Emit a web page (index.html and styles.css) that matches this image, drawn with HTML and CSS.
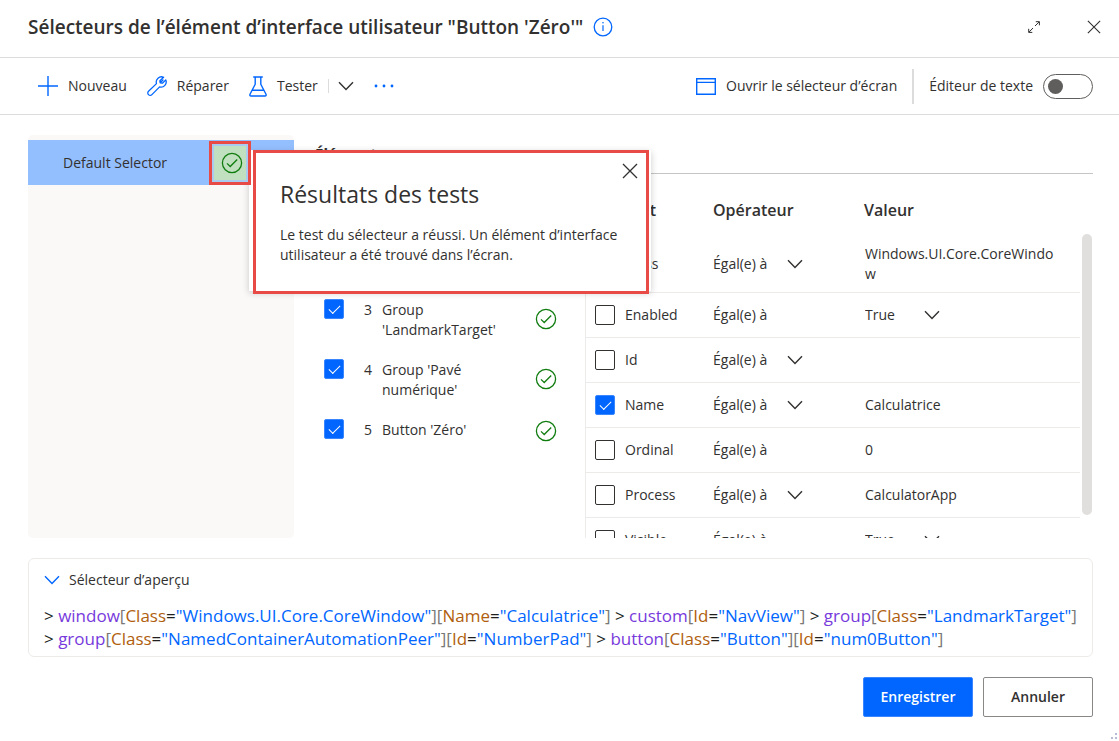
FILE: index.html
```html
<!DOCTYPE html>
<html lang="fr">
<head>
<meta charset="utf-8">
<title>Sélecteurs de l’élément d’interface utilisateur</title>
<link rel="stylesheet" href="styles.css">
</head>
<body>
<svg class="defs" width="0" height="0" aria-hidden="true">
  <symbol id="chevron" viewBox="0 0 16 10"><path d="M1 1.2 8 8.4 15 1.2" fill="none" stroke="currentColor" stroke-width="1.4"/></symbol>
  <symbol id="close" viewBox="0 0 16 16"><path d="M1 1 15 15M15 1 1 15" fill="none" stroke="currentColor" stroke-width="1.3"/></symbol>
  <symbol id="success" viewBox="0 0 22 22"><circle cx="11" cy="11" r="9.6" fill="none" stroke="currentColor" stroke-width="1.3"/><path d="M6 11.4 9.2 14.5 16.2 7.5" fill="none" stroke="currentColor" stroke-width="1.3"/></symbol>
</svg>
<div class="dialog">
  <header class="titlebar">
    <h1 class="title">Sélecteurs de l’élément d’interface utilisateur "Button 'Zéro'"</h1>
    <button class="icon-button accent" aria-label="Informations">
      <svg width="20" height="20" viewBox="0 0 20 20" fill="none" stroke="currentColor"><circle cx="10" cy="10" r="8.8" stroke-width="1.3"/><path d="M10 8.2V14" stroke-width="1.2"/><circle cx="10" cy="5.8" r=".8" fill="currentColor" stroke="none"/></svg>
    </button>
    <div class="window-actions">
      <button class="icon-button" aria-label="Agrandir">
        <svg width="14" height="14" viewBox="0 0 14 14" fill="none" stroke="currentColor"><path d="M8.8 1.7H12.4V5.3M12.2 1.9 8 6M1.7 8.8V12.4H5.3M1.9 12.2 6 8"/></svg>
      </button>
      <button class="icon-button" aria-label="Fermer"><svg width="14" height="14"><use href="#close"/></svg></button>
    </div>
  </header>

  <div class="toolbar">
    <button class="command">
      <svg class="accent" width="20" height="20" viewBox="0 0 20 20" fill="none" stroke="currentColor" stroke-width="1.4"><path d="M10 0V20M0 10H20"/></svg>
      Nouveau
    </button>
    <button class="command">
      <svg class="accent" width="20" height="20" viewBox="0 0 20 20" fill="none" stroke="currentColor" stroke-width="1.3" stroke-linejoin="round" stroke-linecap="round"><path d="M16.6 1.3A5.2 5.2 0 0 0 9.5 7.6L1.5 15.2A2.4 2.4 0 0 0 4.9 18.6L12.6 10.9A5.2 5.2 0 0 0 18.8 3.9L15.4 7.2 13.2 6.8 12.9 4.8ZM13.2 6.8 16 4"/></svg>
      Réparer
    </button>
    <div class="split">
      <button class="command">
        <svg class="accent" width="18" height="21" viewBox="0 0 18 21" fill="none" stroke="currentColor" stroke-width="1.4" stroke-linejoin="round"><path d="M4.2 1H13.8M6.2 1V8.2L1 18.2Q.5 20 2 20H16Q17.5 20 17 18.2L11.8 8.2V1M3.2 14.2H14.8"/></svg>
        Tester
      </button>
      <button class="split-toggle" aria-label="Options de test"><svg width="16" height="10"><use href="#chevron"/></svg></button>
    </div>
    <button class="icon-button accent" aria-label="Plus">
      <svg width="20" height="4" viewBox="0 0 20 4" fill="currentColor"><circle cx="2" cy="2" r="1.4"/><circle cx="10" cy="2" r="1.4"/><circle cx="18" cy="2" r="1.4"/></svg>
    </button>
    <div class="toolbar-end">
      <button class="command">
        <svg class="accent" width="20" height="17" viewBox="0 0 20 17" fill="none" stroke="currentColor" stroke-width="1.4"><path d="M.7.7H19.3V16.3H.7ZM.7 4.4H19.3"/></svg>
        Ouvrir le sélecteur d’écran
      </button>
      <div class="text-editor">
        <label for="editor-switch">Éditeur de texte</label>
        <input class="switch" type="checkbox" role="switch" id="editor-switch">
      </div>
    </div>
  </div>

  <main class="workspace">
    <nav class="selectors">
      <div class="selector-row">
        <button class="selector-name">Default Selector</button>
        <button class="status" aria-label="Test réussi"><svg width="22" height="22"><use href="#success"/></svg></button>
      </div>
    </nav>

    <section class="elements">
      <h2 class="section-title">Éléments</h2>
      <ul class="element-list">
        <li class="element">
          <input class="tick" type="checkbox" id="el3" checked>
          <label class="element-label" for="el3"><span>3</span><span>Group 'LandmarkTarget'</span></label>
          <svg class="ok" width="22" height="22"><use href="#success"/></svg>
        </li>
        <li class="element">
          <input class="tick" type="checkbox" id="el4" checked>
          <label class="element-label" for="el4"><span>4</span><span>Group 'Pavé numérique'</span></label>
          <svg class="ok" width="22" height="22"><use href="#success"/></svg>
        </li>
        <li class="element">
          <input class="tick" type="checkbox" id="el5" checked>
          <label class="element-label" for="el5"><span>5</span><span>Button 'Zéro'</span></label>
          <svg class="ok" width="22" height="22"><use href="#success"/></svg>
        </li>
      </ul>
    </section>

    <section class="attributes">
      <div class="table-area">
        <table class="attribute-table">
          <colgroup><col class="col-name"><col class="col-operator"><col></colgroup>
          <thead><tr><th>Attribut</th><th>Opérateur</th><th>Valeur</th></tr></thead>
          <tbody>
            <tr class="tall">
              <td><label class="attribute"><input class="tick" type="checkbox" checked>Class</label></td>
              <td><span class="dropdown"><select aria-label="Opérateur de Class"><option>Égal(e) à</option></select><svg width="16" height="10"><use href="#chevron"/></svg></span></td>
              <td>Windows.UI.Core.CoreWindow</td>
            </tr>
            <tr>
              <td><label class="attribute"><input class="tick" type="checkbox">Enabled</label></td>
              <td>Égal(e) à</td>
              <td><span class="dropdown short"><select aria-label="Valeur de Enabled"><option>True</option></select><svg width="16" height="10"><use href="#chevron"/></svg></span></td>
            </tr>
            <tr>
              <td><label class="attribute"><input class="tick" type="checkbox">Id</label></td>
              <td><span class="dropdown"><select aria-label="Opérateur de Id"><option>Égal(e) à</option></select><svg width="16" height="10"><use href="#chevron"/></svg></span></td>
              <td></td>
            </tr>
            <tr>
              <td><label class="attribute"><input class="tick" type="checkbox" checked>Name</label></td>
              <td><span class="dropdown"><select aria-label="Opérateur de Name"><option>Égal(e) à</option></select><svg width="16" height="10"><use href="#chevron"/></svg></span></td>
              <td>Calculatrice</td>
            </tr>
            <tr>
              <td><label class="attribute"><input class="tick" type="checkbox">Ordinal</label></td>
              <td>Égal(e) à</td>
              <td>0</td>
            </tr>
            <tr>
              <td><label class="attribute"><input class="tick" type="checkbox">Process</label></td>
              <td><span class="dropdown"><select aria-label="Opérateur de Process"><option>Égal(e) à</option></select><svg width="16" height="10"><use href="#chevron"/></svg></span></td>
              <td>CalculatorApp</td>
            </tr>
            <tr>
              <td><label class="attribute"><input class="tick" type="checkbox">Visible</label></td>
              <td>Égal(e) à</td>
              <td><span class="dropdown short"><select aria-label="Valeur de Visible"><option>True</option></select><svg width="16" height="10"><use href="#chevron"/></svg></span></td>
            </tr>
          </tbody>
        </table>
        <div class="scrollbar"></div>
      </div>
    </section>

    <div class="callout" role="dialog" aria-labelledby="callout-title">
      <div class="callout-frame">
        <button class="icon-button callout-close" aria-label="Fermer les résultats"><svg width="16" height="16"><use href="#close"/></svg></button>
        <h2 class="callout-title" id="callout-title">Résultats des tests</h2>
        <p class="callout-text">Le test du sélecteur a réussi. Un élément d’interface utilisateur a été trouvé dans l’écran.</p>
      </div>
    </div>
  </main>

  <section class="preview">
    <button class="preview-toggle"><svg class="accent" width="16" height="10"><use href="#chevron"/></svg>Sélecteur d’aperçu</button>
    <code class="code">&gt; <span class="tag">window</span><i>[</i><b>Class</b>=<q>"Windows.UI.Core.CoreWindow"</q><i>][</i><b>Name</b>=<q>"Calculatrice"</q><i>]</i> &gt; <span class="tag">custom</span><i>[</i><b>Id</b>=<q>"NavView"</q><i>]</i> &gt; <span class="tag">group</span><i>[</i><b>Class</b>=<q>"LandmarkTarget"</q><i>]</i><br>&gt; <span class="tag">group</span><i>[</i><b>Class</b>=<q>"NamedContainerAutomationPeer"</q><i>][</i><b>Id</b>=<q>"NumberPad"</q><i>]</i> &gt; <span class="tag">button</span><i>[</i><b>Class</b>=<q>"Button"</q><i>][</i><b>Id</b>=<q>"num0Button"</q><i>]</i></code>
  </section>

  <footer class="footer">
    <button class="button primary">Enregistrer</button>
    <button class="button">Annuler</button>
  </footer>
  <svg class="grip" width="8" height="8" viewBox="0 0 8 8" fill="#b4bcd6" aria-hidden="true"><path d="M4 0H6V2H4ZM0 4H2V6H0ZM4 4H6V6H4Z"/></svg>
</div>
</body>
</html>
```
FILE: styles.css
```css
* { box-sizing: border-box; }

body {
  margin: 0;
  background: #fff;
  color: #323130;
  font: 14px/20px "Open Sans", "Noto Sans", sans-serif;
}

h1, h2, p, ul { margin: 0; padding: 0; }

button, select {
  padding: 0;
  border: 0;
  background: none;
  color: inherit;
  font: inherit;
  cursor: pointer;
}

svg { display: block; flex: none; }
.defs { position: absolute; }
.accent { color: #06f; }

.dialog {
  position: relative;
  display: flex;
  flex-direction: column;
  height: 100vh;
  min-height: 560px;
}

/* Title bar */
.titlebar {
  display: flex;
  align-items: center;
  gap: 10px;
  height: 58px;
  padding: 0 18px 3px 28px;
  border-bottom: 1px solid #dcdcdc;
}
.title { font-size: 19px; line-height: 26px; font-weight: 600; }
.window-actions { display: flex; align-items: center; gap: 46px; margin-left: auto; }

/* Toolbar */
.toolbar {
  display: flex;
  align-items: center;
  gap: 20px;
  height: 57px;
  padding: 0 26px 0 38px;
  border-bottom: 1px solid #dcdcdc;
}
.command { display: flex; align-items: center; gap: 10px; white-space: nowrap; }
.split { display: flex; align-items: center; gap: 10px; }
.split-toggle { padding: 2px 0 2px 9px; border-left: 1px solid #dcdcdc; }
.toolbar-end { display: flex; align-items: center; gap: 15px; margin-left: auto; }
.text-editor {
  display: flex;
  align-items: center;
  gap: 10px;
  height: 35px;
  padding-left: 15px;
  border-left: 2px solid #dcdcdc;
}
.switch {
  appearance: none;
  display: flex;
  align-items: center;
  width: 50px;
  height: 25px;
  margin: 0;
  padding: 0 4px;
  border: 1px solid #605e5c;
  border-radius: 13px;
}
.switch::before { content: ""; width: 15px; height: 15px; border-radius: 50%; background: #605e5c; }

/* Workspace */
.workspace {
  position: relative;
  display: grid;
  grid-template-columns: 266px 271px 1fr;
  gap: 0 10px;
  flex: 1;
  min-height: 0;
  margin: 20px 26px 20px 28px;
}
.selectors { padding-top: 5px; border-radius: 5px; background: #faf9f8; }
.selector-row { display: flex; height: 45px; background: #94bfff; }
.selector-name { width: 181px; padding-left: 35px; text-align: left; }
.status {
  position: relative;
  z-index: 2;
  display: grid;
  place-items: center;
  width: 42px;
  height: 44px;
  margin-top: 1px;
  padding-left: 4px;
  border: 3px solid #e84a45;
  background: #c1e0bf;
  box-shadow: inset 0 0 0 2px #a9cbef;
  color: #107c10;
}

.elements { padding: 8px 0 0 11px; }
.section-title { font-size: 15px; line-height: 20px; font-weight: 700; }
.element-list { display: grid; gap: 20px; padding: 137px 0 0 9px; list-style: none; }
.element { display: grid; grid-template-columns: 20px 143px 22px; gap: 0 20px; }
.element .tick { margin-top: -1px; }
.element .ok { align-self: center; margin: 0 0 2px 8px; color: #107c10; }
.element-label { display: flex; gap: 10px; }

.tick {
  appearance: none;
  display: grid;
  place-items: center;
  flex: none;
  width: 20px;
  height: 20px;
  margin: 0;
  border: 1px solid #323130;
  border-radius: 2px;
}
.tick:checked { border-color: #3a86ff; background: #06f; }
.tick:checked::before {
  content: "";
  width: 10px;
  height: 5px;
  margin-bottom: 3px;
  border: solid #fff;
  border-width: 0 0 1px 1px;
  transform: rotate(-45deg);
}

.attributes { min-height: 0; padding-top: 38px; overflow: hidden; }
.table-area { display: grid; grid-template-columns: 1fr 10px; gap: 2px; padding-right: 1px; border-top: 1px solid #c8c6c4; }
.attribute-table {
  width: 100%;
  border-collapse: separate;
  border-spacing: 0;
  border-left: 1px solid #edebe9;
  table-layout: fixed;
}
.col-name { width: 127px; }
.col-operator { width: 151px; }
th { height: 61px; padding: 10px 0 0; font-size: 16px; font-weight: 600; text-align: left; }
th:first-child, td:first-child { padding-left: 9px; }
td { height: 45px; padding: 0; border-bottom: 1px solid #edebe9; }
.tall td { height: 58px; }
td:last-child { padding: 0 20px 0 1px; overflow-wrap: anywhere; }
.attribute { display: flex; align-items: center; gap: 10px; }
.dropdown { display: grid; grid-template-columns: 90px; align-items: center; }
.dropdown.short { grid-template-columns: 75px; }
.dropdown select, .dropdown svg { grid-area: 1 / 1; }
.dropdown select { appearance: none; width: 100%; }
.dropdown svg { justify-self: end; pointer-events: none; }
.scrollbar { height: 281px; margin-top: 60px; border-radius: 5px; background: #e1dfdd; }

/* Test result callout */
.callout {
  position: absolute;
  top: 15px;
  left: 221px;
  width: 402px;
  padding: 0 2px 0 4px;
  background: #fff;
  box-shadow: 0 2px 7px rgba(0, 0, 0, .2);
}
.callout-frame {
  position: relative;
  height: 144px;
  margin-bottom: -3px;
  padding: 25px 20px 20px 24px;
  border: 3px solid #e84a45;
  background: #fff;
}
.callout-close { position: absolute; top: 10px; right: 8px; }
.callout-title { font-size: 23px; line-height: 32px; font-weight: 400; }
.callout-text { margin-top: 15px; }

/* Selector preview */
.preview { margin: 0 26px 0 28px; padding: 11px 15px 6px; border: 1px solid #edebe9; border-radius: 6px; }
.preview-toggle { display: flex; align-items: center; gap: 9px; }
.code {
  display: block;
  margin-top: 14px;
  color: #201f1e;
  font: 17px/23px "Open Sans", "Noto Sans", sans-serif;
}
.code i { color: #797775; font-style: normal; }
.code b { color: #b05e0d; font-weight: 400; }
.code q { color: #06f; quotes: none; }
.code .tag { color: #773adc; }

/* Footer */
.footer { display: flex; justify-content: flex-end; gap: 10px; padding: 20px 26px 24px; }
.button {
  width: 110px;
  height: 40px;
  border: 1px solid #8a8886;
  border-radius: 2px;
  font-weight: 600;
}
.primary { border-color: #3a86ff; background: #06f; color: #fff; }
.grip { position: absolute; right: 0; bottom: 0; }
```
